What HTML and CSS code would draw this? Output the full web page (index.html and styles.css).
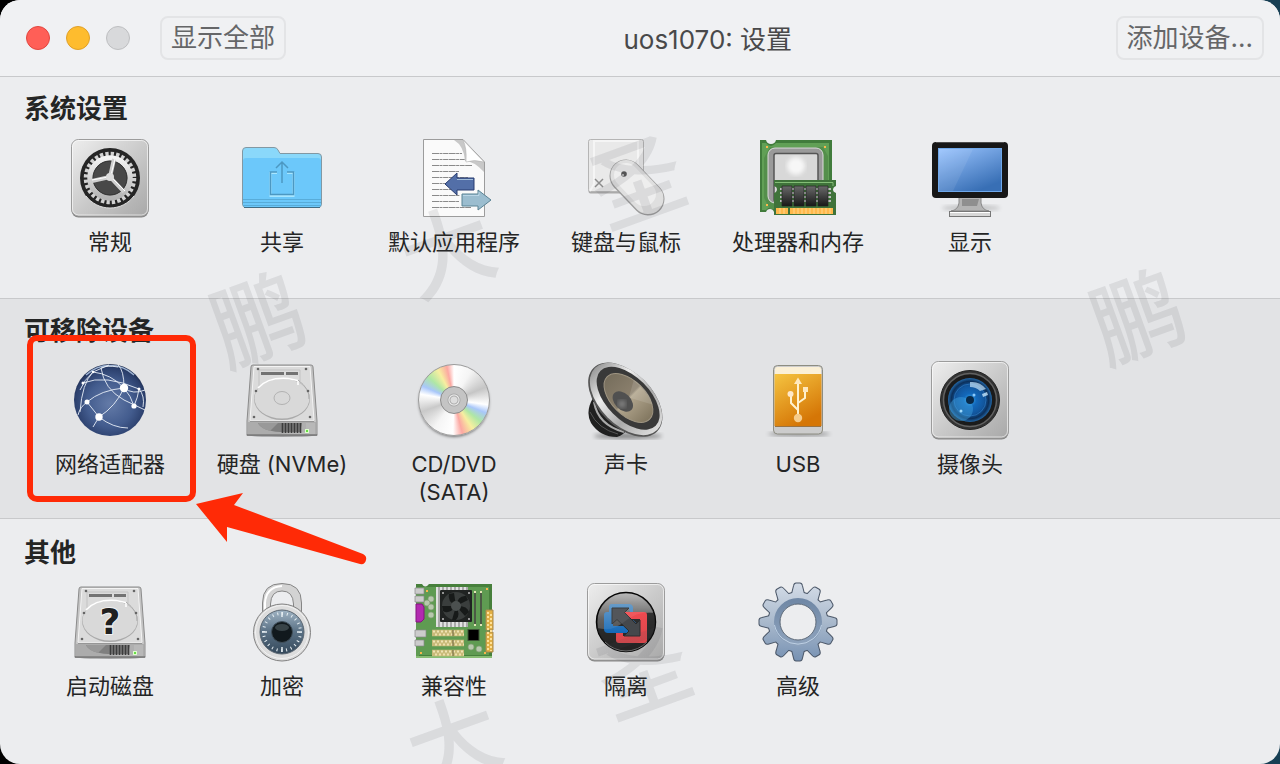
FILE: index.html
```html
<!DOCTYPE html>
<html lang="zh-CN">
<head>
    <meta charset="UTF-8">
    <meta name="viewport" content="width=device-width, initial-scale=1.0">
    <title>uos1070: 设置</title>
    <link rel="stylesheet" href="styles.css">
</head>
<body>
    <!-- 公用图形 -->
    <svg class="defs" width="0" height="0" aria-hidden="true">
        <defs>
            <linearGradient id="plateFill" x1="0" y1="0" x2="1" y2="1">
                <stop offset="0" stop-color="#eeeeee"/>
                <stop offset="1" stop-color="#a8a8a8"/>
            </linearGradient>
            <linearGradient id="metal" x1="0" y1="0" x2="0" y2="1">
                <stop offset="0" stop-color="#f4f4f4"/>
                <stop offset="1" stop-color="#b4b4b4"/>
            </linearGradient>
            <linearGradient id="shade" x1="0" y1="0" x2="0" y2="1">
                <stop offset="0" stop-color="#6a6a6a"/>
                <stop offset="1" stop-color="#181818"/>
            </linearGradient>
            <filter id="soft"><feGaussianBlur stdDeviation="2"/></filter>
            <symbol id="plate" viewBox="0 0 80 80">
                <rect x="1.5" y="2" width="77" height="77.5" rx="7" fill="#858585"/>
                <rect x="1.5" y="1.5" width="77" height="76.5" rx="7" fill="url(#plateFill)" stroke="#9c9c9c"/>
                <rect x="2.5" y="2.5" width="75" height="74.5" rx="6" fill="none" stroke="#fff" stroke-opacity=".6"/>
            </symbol>
            <symbol id="drive" viewBox="0 0 80 80">
                <ellipse cx="40" cy="75" rx="36" ry="2" fill="#000" opacity=".3"/>
                <path d="M11 5H69Q71 5 71 7L75 61V75H5V61L9 7Q9 5 11 5Z" fill="#c4c4c4" stroke="#8b8b8b"/>
                <path d="M6 62H74V74H6Z" fill="#acacac"/>
                <path d="M16 63H64V72H38Q20 71 16 63Z" fill="#7f7f7f"/>
                <path d="M16 63H36L28 71Q18 68 16 63Z" fill="#999"/>
                <path d="M12 6.500H68L72 60Q72 61 70 61H10Q8 61 8 60Z" fill="#dbdbdb" stroke="#f4f4f4"/>
                <path d="M8 61.500H72" stroke="#969696"/>
                <path d="M17 10H58V21" fill="none" stroke="#c3c3c3"/>
                <path d="M17 10V26" stroke="#c3c3c3"/>
                <ellipse cx="40" cy="39" rx="28" ry="21" fill="#aaa"/>
                <ellipse cx="40" cy="38.500" rx="27.500" ry="20" fill="#d9d9d9"/>
                <path d="M16 28Q26 17 46 18.500L56 20.500V25" fill="none" stroke="#fff" stroke-width="1.500"/>
                <path d="M56 20Q68 29 67 39" fill="none" stroke="#aaa"/>
                <path d="M19 13.500H42M44 13.500H56" stroke="#727272" stroke-width="3"/>
                <g fill="#666"><circle cx="16" cy="9" r="1.300"/><circle cx="64" cy="9" r="1.300"/><circle cx="14" cy="31" r="1.300"/><circle cx="66" cy="31" r="1.300"/><circle cx="12" cy="57" r="1.300"/><circle cx="68" cy="57" r="1.300"/></g>
                <path d="M60 63H73V74H38L58 72Z" fill="#bbb" opacity=".8"/>
                <path d="M40.500 63V73M43.500 63V73M46.500 63V73M49.500 63V73M52.500 63V73M55.500 63V73M58.500 63V73" stroke="#3c3c3c" stroke-width="1.600"/>
                <rect x="63.500" y="69.500" width="3" height="3" fill="#6d4" stroke="#dfc"/>
                <path d="M5 75H75" stroke="#666"/>
            </symbol>
        </defs>
    </svg>

    <div class="window">
        <header class="titlebar">
            <div class="lights">
                <button class="light close" aria-label="关闭"></button>
                <button class="light minimize" aria-label="最小化"></button>
                <button class="light zoom" aria-label="缩放"></button>
            </div>
            <button class="bar-button">显示全部</button>
            <h1>uos1070: 设置</h1>
            <button class="bar-button">添加设备...</button>
        </header>

        <main>
            <!-- 系统设置 -->
            <section class="group">
                <h2>系统设置</h2>
                <div class="items">
                    <button class="item">
                        <svg class="icon" viewBox="0 0 80 80">
                            <use href="#plate"/>
                            <circle cx="40" cy="40" r="30" fill="#252525"/>
                            <path d="M16 58A30 30 0 0 0 64 58" fill="none" stroke="#ddd"/>
                            <circle cx="40" cy="40" r="24" fill="none" stroke="#d2d2d2" stroke-width="4.500" stroke-dasharray="3.300 2.084"/>
                            <circle cx="40" cy="40" r="20" fill="#484848" stroke="url(#metal)" stroke-width="5.500"/>
                            <circle cx="40" cy="40" r="17" fill="none" stroke="#333"/>
                            <path d="M40 39L44 21M40 39L22 43M40 39L54 54" stroke="#d0d0d0" stroke-width="4"/>
                            <path d="M41 37L45 21M38 39L22 42M42 40L55 53" stroke="#fff" stroke-width="1"/>
                            <circle cx="40" cy="39" r="4" fill="#ddd"/>
                        </svg>
                        <span>常规</span>
                    </button>
                    <button class="item">
                        <svg class="icon" viewBox="0 0 80 80">
                            <path d="M.5 13Q.5 9.500 4 9.500H32Q35 9.500 36 12L38 15.500H76Q79.500 15.500 79.500 19V66Q79.500 69.500 76 69.500H4Q.5 69.500 .5 66Z" fill="#8ad8fa" stroke="#8298a3"/>
                            <path d="M1 23Q1 20 4 20H76Q79 20 79 23V66Q79 69 76 69H4Q1 69 1 66Z" fill="#6cc8fa"/>
                            <path d="M1 61.500H79M1 64.500H79M1 67.500H79" stroke="#58acd9"/>
                            <path d="M2 69.500H78" stroke="#426b82"/>
                            <path d="M35 35H28.500V58H51.500V35H45" fill="none" stroke="#a7e6ff" stroke-width="2"/>
                            <path d="M35 34H28.500V56.500H51.500V34H45M40 45V24M34 30L40 24L46 30" fill="none" stroke="#4c98c2" stroke-width="1.500"/>
                        </svg>
                        <span>共享</span>
                    </button>
                    <button class="item">
                        <svg class="icon" viewBox="0 0 80 80">
                            <path d="M9.500 1.500H49L70.500 24V78.500H9.500Z" fill="#fafafa" stroke="#9c9c9c"/>
                            <path d="M40 2H49L70 24V34Q60 23 51 23Q50 8 40 2Z" fill="#c8c8c8"/>
                            <path d="M49 2L70 24Q60 21 52 24Q53 10 49 2Z" fill="#fff" stroke="#aaa" stroke-width=".5"/>
                            <path d="M18 15.500H48M18 21.500H51M18 27.500H58M18 33.500H45M18 39.500H54M18 45.500H33M18 51.500H50M18 57.500H46M18 63.500H45M18 69.500H57" stroke="#8a8a8a" stroke-width="1" stroke-dasharray="7 .5 3 .6 5 .5"/>
                            <path d="M31 46L43 35V40H60V52H43V57Z" fill="#536fa8" stroke="#293c70"/>
                            <path d="M77 62L64 52V56H48V68H64V72Z" fill="#9bbdcf" stroke="#5b8495"/>
                            <path d="M43 41.500H59M49 57.500H65V54" fill="none" stroke="#c9e1ef" opacity=".7"/>
                        </svg>
                        <span>默认应用程序</span>
                    </button>
                    <button class="item">
                        <svg class="icon" viewBox="0 0 80 80">
                            <rect x="2.500" y="2.500" width="55" height="53" rx="2" fill="#aaa"/>
                            <rect x="2.500" y="1.500" width="55" height="52" rx="2" fill="#e9e9e9" stroke="#b5b5b5"/>
                            <path d="M4 53L8 46V3H52V46L56 53" fill="none" stroke="#f5f5f5" stroke-width="2"/>
                            <path d="M9 41L17 49M17 41L9 49" stroke="#8c8c8c" stroke-width="1.500"/>
                            <path d="M40 38L62 61" stroke="#9c9c9c" stroke-width="33" stroke-linecap="round"/>
                            <path d="M40 37.500L62 60.500" stroke="#dfdfdf" stroke-width="31" stroke-linecap="round"/>
                            <path d="M40 37L58 56" stroke="#eeeeee" stroke-width="24" stroke-linecap="round"/>
                            <circle cx="38" cy="36" r="2.800" fill="#555"/><circle cx="37" cy="37" r="1" fill="#ccc"/>
                        </svg>
                        <span>键盘与鼠标</span>
                    </button>
                    <button class="item">
                        <svg class="icon" viewBox="0 0 80 80">
                            <path d="M2 2H8Q9 6 13 6Q17 6 18 2H74V74H16Q15 71 12 71Q9 71 8 74H2Z" fill="#417c3c"/>
                            <path d="M4 5H8Q13 11 18 5H71V71H18Q12 67 8 72H4Z" fill="#61a056"/>
                            <path d="M6 20L12 9H65L70 18V71H12L6 60Z" fill="#548f4b"/>
                            <rect x="10" y="10" width="55" height="55" rx="7" fill="#9a9a9a" stroke="#ddd"/>
                            <rect x="16" y="15.500" width="44" height="48" rx="2" fill="#d8d8d8" stroke="#555" stroke-width="1.500"/>
                            <circle cx="38" cy="28" r="9" fill="#fff" opacity=".8" filter="url(#soft)"/>
                            <path d="M8 8H10V10H8ZM66 8H68V10H66ZM8 66H10V68H8Z" fill="#fbb84d"/>
                            <path d="M16 42H78V48Q75 49 75 52Q75 54 78 55V77H16V55Q19 54 19 51Q19 49 16 48Z" fill="#3f733a"/>
                            <path d="M17 44.500H75V48" fill="none" stroke="#83bd76"/>
                            <path d="M22 51H73M22 55H73M22 59H73M22 63H73" stroke="#bbb" stroke-width="2"/>
                            <g fill="url(#shade)" stroke="#222" stroke-width=".7"><path d="M24 48H34V68H24ZM36 48H46V68H36ZM48 48H58V68H48ZM60 48H70V68H60Z"/></g>
                            <path d="M18 70H30V76H18ZM32 70H75V76H32Z" fill="#ffb94c"/>
                            <path d="M22 70V76M26 70V76M36 70V76M40 70V76M44 70V76M48 70V76M52 70V76M56 70V76M60 70V76M64 70V76M68 70V76M72 70V76" stroke="#ffd68b"/>
                        </svg>
                        <span>处理器和内存</span>
                    </button>
                    <button class="item">
                        <svg class="icon" viewBox="0 0 80 80">
                            <linearGradient id="screen" x1="0" y1="0" x2=".6" y2="1"><stop stop-color="#9bc5ff"/><stop offset="1" stop-color="#386fb5"/></linearGradient>
                            <ellipse cx="41" cy="70" rx="29" ry="3" fill="#000" opacity=".18" filter="url(#soft)"/>
                            <path d="M29 59H51V65Q52 72 59 73H21Q28 72 29 65Z" fill="#b4b4b4" stroke="#888"/>
                            <path d="M32 61H49L47 68H32Z" fill="#777" opacity=".6"/>
                            <rect x="19.500" y="73.500" width="41" height="5" fill="#d7d7d7" stroke="#777"/>
                            <path d="M20 74.500H60" stroke="#fff"/>
                            <rect x="2" y="4" width="76" height="56" rx="4" fill="#171717"/>
                            <path d="M6 4.500H74" stroke="#4d4d4d"/>
                            <rect x="8.500" y="10.500" width="63" height="43" fill="url(#screen)" stroke="#6fa8ea"/>
                            <path d="M9 11H43L23 53H9Z" fill="#fff" opacity=".08"/>
                        </svg>
                        <span>显示</span>
                    </button>
                </div>
            </section>

            <!-- 可移除设备 -->
            <section class="group removable">
                <h2>可移除设备</h2>
                <div class="items">
                    <button class="item selected">
                        <svg class="icon" viewBox="0 0 80 80">
                            <radialGradient id="globe" cx=".5" cy=".55" r=".58"><stop stop-color="#647ba8"/><stop offset=".55" stop-color="#435c8e"/><stop offset=".85" stop-color="#2b3f6c"/><stop offset="1" stop-color="#141d36"/></radialGradient>
                            <circle cx="40" cy="40" r="36" fill="url(#globe)"/>
                            <path d="M16 15A35 35 0 0 1 64 15" fill="none" stroke="#9bb1d1" stroke-width="1.500"/>
                            <g fill="none" stroke="#e8eef7" stroke-width=".9">
                                <path d="M54 28Q54 10 48 5M54 28Q41 14 23 12Q14 20 10 30M54 28Q31 30 17 42M54 28Q46 46 29 57M54 28Q61 36 64 46M54 28Q63 35 75 30"/>
                                <path d="M31 8Q34 29 54 40L75 50M31 8Q37 5 48 7M13 23Q35 14 69 29M69 29Q75 36 73 47M64 46Q68 37 69 29M10 52Q12 23 23 12L39 5M17 42L29 57L23 67M17 42Q10 47 8 55M29 57Q43 68 58 68"/>
                            </g>
                            <g fill="#fff"><circle cx="54" cy="28" r="4.200"/><circle cx="17" cy="42" r="2.500"/><circle cx="29" cy="57" r="3.700"/><circle cx="64" cy="46" r="2.600"/><circle cx="13" cy="23" r="1.500"/><circle cx="23" cy="12" r="1.300"/><circle cx="69" cy="29" r="1.500"/></g>
                        </svg>
                        <span>网络适配器</span>
                    </button>
                    <button class="item">
                        <svg class="icon" viewBox="0 0 80 80">
                            <use href="#drive"/>
                            <ellipse cx="40" cy="38" rx="8" ry="6.500" fill="#d8d8d8" stroke="#b2b2b2"/>
                        </svg>
                        <span>硬盘 (NVMe)</span>
                    </button>
                    <button class="item">
                        <span class="icon disc"><span class="hub"></span></span>
                        <span>CD/DVD<br>(SATA)</span>
                    </button>
                    <button class="item">
                        <svg class="icon" viewBox="0 0 80 80">
                            <linearGradient id="rim"><stop stop-color="#999"/><stop offset=".3" stop-color="#eee"/><stop offset=".65" stop-color="#aaa"/><stop offset="1" stop-color="#ddd"/></linearGradient>
                            <linearGradient id="cone"><stop stop-color="#776e5d"/><stop offset=".48" stop-color="#8b806d"/><stop offset=".52" stop-color="#b2a68e"/><stop offset="1" stop-color="#81765f"/></linearGradient>
                            <ellipse cx="42" cy="76" rx="34" ry="3" fill="#000" opacity=".4" filter="url(#soft)"/>
                            <path d="M7 38Q-1 52 5 63Q14 77 31 77Q38 75 41 69Z" fill="#202020"/>
                            <path d="M8 42Q12 65 38 72" fill="none" stroke="#aaa" stroke-width="2"/>
                            <path d="M4 52Q12 69 32 74" fill="none" stroke="#555"/>
                            <g transform="rotate(45 40 39)">
                                <ellipse cx="40" cy="40" rx="45" ry="27" fill="#555"/>
                                <ellipse cx="40" cy="39" rx="44" ry="26" fill="url(#rim)"/>
                                <ellipse cx="41" cy="37" rx="39" ry="21.500" fill="#393939"/>
                                <ellipse cx="41" cy="36.500" rx="30" ry="17" fill="url(#cone)" stroke="#9f9582"/>
                                <path d="M41 36L32 20Q50 16 63 24Z" fill="#fff" opacity=".12"/>
                                <ellipse cx="39.500" cy="43" rx="12" ry="8" fill="#505050"/>
                            </g>
                            <circle cx="36" cy="44" r="4" fill="#aaa" opacity=".5" filter="url(#soft)"/>
                        </svg>
                        <span>声卡</span>
                    </button>
                    <button class="item">
                        <svg class="icon" viewBox="0 0 80 80">
                            <linearGradient id="orange" x1="0" y1="0" x2=".5" y2="1"><stop stop-color="#f5c441"/><stop offset="1" stop-color="#d57606"/></linearGradient>
                            <ellipse cx="41" cy="74" rx="31" ry="2" fill="#000" opacity=".4" filter="url(#soft)"/>
                            <rect x="15.500" y="5.500" width="49" height="68.500" rx="4" fill="#ccc" stroke="#8d8d82"/>
                            <path d="M17 14V9Q17 7 19 7H61Q63 7 63 9V14Z" fill="#fbf0d6"/>
                            <path d="M16.500 14H63.500V66H16.500Z" fill="url(#orange)"/>
                            <path d="M17 66.500H63" stroke="#997343"/>
                            <path d="M40 58V21M40 50L33 43V34M40 43L47 38V29" fill="none" stroke="#fff2cf" stroke-width="2"/>
                            <path d="M36 24L40 17.500L44 24Z" fill="#ffe8bd"/><circle cx="40" cy="58" r="4.200" fill="#f6cc8c"/><circle cx="32.500" cy="34" r="3" fill="#ffe8c8"/><path d="M45 27H50V32H45Z" fill="#ffe8bd"/>
                        </svg>
                        <span>USB</span>
                    </button>
                    <button class="item">
                        <svg class="icon" viewBox="0 0 80 80">
                            <radialGradient id="lens"><stop stop-color="#39adf1"/><stop offset=".3" stop-color="#1368ba"/><stop offset=".65" stop-color="#12569d"/><stop offset=".85" stop-color="#0c305b"/><stop offset="1" stop-color="#2368a8"/></radialGradient>
                            <use href="#plate"/>
                            <circle cx="40" cy="40" r="29.500" fill="#333" stroke="#222"/>
                            <circle cx="40" cy="40" r="26.500" fill="#1b1b1b" stroke="#626262" stroke-width="1.500"/>
                            <circle cx="40" cy="40" r="22" fill="url(#lens)"/>
                            <circle cx="40" cy="40" r="16" fill="none" stroke="#3283d1" opacity=".6"/>
                            <circle cx="31" cy="49" r="12" fill="#42a5df" opacity=".45"/>
                            <path d="M40 22Q50 21 56 29L50 31Q46 27 40 27Z" fill="#b9daf1" opacity=".75"/>
                            <path d="M52 34L57 32L58 35L53 37Z" fill="#c7e7fb" opacity=".8"/>
                            <circle cx="40" cy="40" r="4" fill="#092a49"/>
                            <circle cx="44" cy="35" r="1.500" fill="#8ac9fc"/><circle cx="31" cy="51" r="1.500" fill="#9ed8fa"/>
                        </svg>
                        <span>摄像头</span>
                    </button>
                </div>
            </section>

            <!-- 其他 -->
            <section class="group other">
                <h2>其他</h2>
                <div class="items">
                    <button class="item">
                        <svg class="icon" viewBox="0 0 80 80">
                            <use href="#drive"/>
                            <text class="question" x="40" y="52" text-anchor="middle">?</text>
                        </svg>
                        <span>启动磁盘</span>
                    </button>
                    <button class="item">
                        <svg class="icon" viewBox="0 0 80 80">
                            <linearGradient id="dial" x1="0" y1="0" x2="0" y2="1"><stop stop-color="#a0b4c4"/><stop offset=".5" stop-color="#597084"/><stop offset="1" stop-color="#34485a"/></linearGradient>
                            <path d="M20.500 40V21Q20.500 1.500 40 1.500Q59.500 1.500 59.500 21V40H51.500V22Q51 9 40 9Q29 9 28.500 22V40Z" fill="#d3d3d3" stroke="#858585"/>
                            <path d="M23 35V21Q24 5 40 4" fill="none" stroke="#fff" stroke-width="2"/>
                            <circle cx="40" cy="50.500" r="28.500" fill="#ddd" stroke="#828282"/>
                            <circle cx="40" cy="50" r="26.500" fill="none" stroke="#f3f3f3"/>
                            <circle cx="40" cy="50" r="22" fill="url(#dial)" stroke="#596570"/>
                            <circle cx="40" cy="50" r="18.500" fill="none" stroke="#e5edf1" stroke-width="3" stroke-dasharray="1 3.843" stroke-dashoffset=".5"/>
                            <path d="M40 30V35M40 65V70M20 50H25M55 50H60" stroke="#e5edf1" stroke-width="1.500"/>
                            <circle cx="40" cy="50" r="10.500" fill="#11191d" stroke="#41505b"/>
                            <ellipse cx="40" cy="45.500" rx="7" ry="3.500" fill="#49565a" opacity=".7"/>
                        </svg>
                        <span>加密</span>
                    </button>
                    <button class="item">
                        <svg class="icon" viewBox="0 0 80 80">
                            <path d="M2 2H8Q11 7 15 2H78V76H2Z" fill="#47803c"/>
                            <path d="M3 5H75V73H5V76H2V5Z" fill="#5f9b52"/>
                            <path d="M2 75H78" stroke="#87bc73" stroke-width="2"/>
                            <rect x="22" y="5" width="32" height="40" fill="#aaa"/>
                            <path d="M23 5V45M27 5V45M31 5V45M35 5V45M39 5V45M43 5V45M47 5V45M51 5V45" stroke="#e1e1e1" stroke-width="2"/>
                            <rect x="26" y="8" width="32" height="32" rx="1" fill="#202322"/>
                            <circle cx="42" cy="24" r="14" fill="#3a3e3d"/>
                            <path d="M42 24Q33 19 35 12L40 11ZM42 24Q44 13 52 14L54 18ZM42 24Q53 23 55 30L51 34ZM42 24Q47 33 42 38H38ZM42 24Q35 33 29 29L28 24Z" fill="#171a19"/>
                            <circle cx="42" cy="24" r="5" fill="#4b504f"/>
                            <g fill="#bbb"><circle cx="29" cy="11" r="1"/><circle cx="55" cy="11" r="1"/><circle cx="29" cy="37" r="1"/><circle cx="55" cy="37" r="1"/></g>
                            <path d="M61 10V44M67 10V44" stroke="#4c5945" stroke-width="2"/>
                            <path d="M60 10H62M66 10H68M60 43H62M66 43H68" stroke="#e4e4b5" stroke-width="2"/>
                            <path d="M1 6H10V12H1ZM1 14H10V20H1ZM1 48H12V55H1ZM1 58H10V64H1Z" fill="#ccc" stroke="#888" stroke-width=".7"/>
                            <path d="M2 22H8L10 25V37L7 40H2Z" fill="#b22ab0" stroke="#83157f"/>
                            <g fill="#b7c8ad" stroke="#849d77" stroke-width=".7"><circle cx="17" cy="17" r="3"/><circle cx="13" cy="21" r="3"/><circle cx="17" cy="25" r="3"/><circle cx="17" cy="33" r="3"/><circle cx="57" cy="65" r="3"/><circle cx="65" cy="67" r="3"/></g>
                            <path d="M18 51H50M18 61H50M18 71H50" stroke="#c8ba79" stroke-width="6.500"/>
                            <path d="M19 49.500H50M19 59.500H50M19 69.500H50" stroke="#f0e4b5" stroke-width="2" stroke-dasharray="2 2"/>
                            <path d="M21 52.500H50M21 62.500H50M21 72.500H50" stroke="#eee0ae" stroke-width="2" stroke-dasharray="2 2"/>
                            <path d="M39 48V54M39 58V64M39 68V74" stroke="#756d41" stroke-width="2" opacity=".6"/>
                            <rect x="54" y="47.500" width="11" height="11" fill="#000" stroke="#3e5637"/>
                            <path d="M72 28H79V48H72ZM72 50H79V70H72Z" fill="#e3b044" stroke="#a88a51"/>
                            <path d="M74 30V69M77 32V69" stroke="#ffe198" stroke-width="2" stroke-dasharray="2 2"/>
                            <path d="M12 8H14V10H12ZM72 6H74V8H72ZM6 70H8V72H6ZM70 70H72V72H70Z" fill="#f8b54c"/>
                        </svg>
                        <span>兼容性</span>
                    </button>
                    <button class="item">
                        <svg class="icon" viewBox="0 0 80 80">
                            <linearGradient id="glass" x1="0" y1="0" x2="0" y2="1"><stop stop-color="#b5b5b5"/><stop offset=".45" stop-color="#555"/><stop offset="1" stop-color="#2a2a2a"/></linearGradient>
                            <linearGradient id="blueLink" x1="0" y1="0" x2="0" y2="1"><stop stop-color="#5a93c4"/><stop offset="1" stop-color="#1268b8"/></linearGradient>
                            <linearGradient id="redLink" x1="0" y1="0" x2="0" y2="1"><stop stop-color="#f04a50"/><stop offset="1" stop-color="#d8474c"/></linearGradient>
                            <use href="#plate"/>
                            <circle cx="40" cy="40" r="29.500" fill="url(#glass)" stroke="#050505" stroke-width="1.500"/>
                            <path d="M11 46Q25 50 38 40Q52 29 68 31Q71 42 67 51Q60 68 40 68.500Q17 68 11 46Z" fill="#202020" opacity=".75"/>
                            <path fill-rule="evenodd" d="M26 22H43Q46 22 47 25V30H44L43 27H27V44H47V38L51 42V51H22Q18 51 18 47V33Q18 30 21 30H23V25Q23 22 26 22Z" fill="url(#blueLink)"/>
                            <path fill-rule="evenodd" d="M36 30H58Q61 30 61 33V58Q61 61 58 61H33Q30 61 30 58V51H37V54H54V37H40L33 31Q34 30 36 30Z" fill="url(#redLink)"/>
                            <path d="M26 26H43L38.500 30.500L50 42L54 38V54H38L43 49L31 37.500L26 42Z" fill="#45484c" stroke="#2a2c2e"/>
                            <path d="M12 34Q16 12 40 11.500Q61 12 68 30Q51 29 38 40Q27 50 12 46Z" fill="#fff" opacity=".08"/>
                            <path d="M19 60A29 29 0 0 0 61 60" fill="none" stroke="#aaa" opacity=".6"/>
                        </svg>
                        <span>隔离</span>
                    </button>
                    <button class="item">
                        <svg class="icon" viewBox="0 0 80 80">
                            <linearGradient id="steel" x1="0" y1="0" x2="0" y2="1"><stop stop-color="#d5dde8"/><stop offset=".5" stop-color="#a9b9cc"/><stop offset="1" stop-color="#7590b2"/></linearGradient>
                            <linearGradient id="steelRing" x1="0" y1="0" x2="0" y2="1"><stop stop-color="#7088a6"/><stop offset="1" stop-color="#8da2bc"/></linearGradient>
                            <defs>
                                <path id="bar" d="M34 12L36 4Q36.500 1.500 38 1.500H42Q43.500 1.500 44 4L46 12V68L44 76Q43.500 78.500 42 78.500H38Q36.500 78.500 36 76L34 68Z"/>
                                <g id="cog">
                                    <use href="#bar"/>
                                    <use href="#bar" transform="rotate(30 40 40)"/>
                                    <use href="#bar" transform="rotate(60 40 40)"/>
                                    <use href="#bar" transform="rotate(90 40 40)"/>
                                    <use href="#bar" transform="rotate(120 40 40)"/>
                                    <use href="#bar" transform="rotate(150 40 40)"/>
                                    <circle cx="40" cy="40" r="29.500"/>
                                </g>
                                <mask id="hole"><rect width="80" height="80" fill="#fff"/><circle cx="40" cy="40" r="18" fill="#000"/></mask>
                                <mask id="cogMask"><use href="#cog" fill="#fff"/></mask>
                            </defs>
                            <g mask="url(#hole)">
                                <use href="#cog" fill="#4b5768" stroke="#4b5768" stroke-width="2"/>
                                <rect width="80" height="80" fill="url(#steel)" mask="url(#cogMask)"/>
                                <circle cx="40" cy="40" r="21" fill="none" stroke="url(#steelRing)" stroke-width="6"/>
                                <path d="M16.500 43A24 24 0 0 0 63.500 43" fill="none" stroke="#bed0e4"/>
                            </g>
                            <circle cx="40" cy="40" r="18" fill="none" stroke="#5d6978"/>
                        </svg>
                        <span>高级</span>
                    </button>
                </div>
            </section>
        </main>

        <!-- 箭头标注 -->
        <svg class="arrow" width="172" height="74" viewBox="0 0 172 74" aria-hidden="true">
            <path d="M1 13L48 2L39 14L168 63Q172 65 171 69Q170 74 165 73L32 36V51Z" fill="#ff2a06"/>
        </svg>

        <!-- 水印 -->
        <div class="watermark mark-one" aria-hidden="true"><span>鹏</span><span>大</span><span>圣</span></div>
        <div class="watermark mark-two" aria-hidden="true"><span>大</span><span>圣</span></div>
        <div class="watermark mark-three" aria-hidden="true"><span>鹏</span></div>
    </div>
</body>
</html>
```
FILE: styles.css
```css
:root {
    --window-bg: #ecedef;
    --bar-bg: #f0f1f3;
    --band-bg: #e2e3e5;
    --line-color: #c8c9cb;
    --text-color: #242525;
    --mark-color: #ff2a06;
}

*,
*::after {
    margin: 0;
    padding: 0;
    box-sizing: border-box;
    font-family: Inter, "Noto Sans CJK SC", sans-serif;
}

body {
    background: linear-gradient(90deg, #000 50%, #173f54 50%);
    color: var(--text-color);
    min-height: 100vh;
}

button {
    background: none;
    border: none;
    color: inherit;
}

.defs {
    position: absolute;
}

.window {
    position: relative;
    min-height: 100vh;
    overflow: hidden;
    background: var(--window-bg);
    border-radius: 20px;
}

/* 标题栏 */
.titlebar {
    display: flex;
    align-items: center;
    height: 77px;
    padding: 0 16px 0 26px;
    background: var(--bar-bg);
    border-bottom: 1px solid var(--line-color);
}

.lights {
    display: flex;
    gap: 16px;
    margin-right: 30px;
}

.light {
    width: 24px;
    height: 24px;
    border-radius: 50%;
}

.close {
    background: #ff5f57;
    border: 1px solid #e2463f;
}

.minimize {
    background: #febc2e;
    border: 1px solid #e0a028;
}

.zoom {
    background: #d8d9db;
    border: 1px solid #bebfc1;
}

.bar-button {
    height: 44px;
    padding: 0 9px;
    border: 2px solid #e3e4e6;
    border-radius: 8px;
    color: #656668;
    font-size: 26px;
    line-height: 40px;
    white-space: nowrap;
}

.titlebar h1 {
    flex: 1;
    padding: 4px 0 0 14px;
    text-align: center;
    color: #49494a;
    font-size: 26px;
    font-weight: 400;
    line-height: 36px;
}

/* 设置分组 */
.group {
    padding: 14px 24px 42px;
}

.group h2 {
    margin-bottom: 11px;
    font-size: 26px;
    font-weight: 700;
    line-height: 36px;
}

.removable {
    padding-bottom: 12px;
    background: var(--band-bg);
    border-top: 1px solid var(--line-color);
    border-bottom: 1px solid var(--line-color);
}

.other {
    padding-top: 16px;
}

.items {
    display: grid;
    grid-template-columns: repeat(auto-fill, 172px);
    align-items: start;
}

.item {
    position: relative;
    display: flex;
    flex-direction: column;
    align-items: center;
    gap: 10px;
    font-size: 22px;
    line-height: 28px;
}

.icon {
    display: block;
    width: 80px;
    height: 80px;
}

.question {
    fill: #202020;
    stroke: #f2f2f2;
    stroke-width: 2px;
    paint-order: stroke;
    font: 700 36px "DejaVu Sans", sans-serif;
}

/* 光盘 */
.disc {
    width: 72px;
    height: 72px;
    margin: 4px;
    padding: 21px;
    border: 1px solid #9b9b9b;
    border-radius: 50%;
    background: conic-gradient(#fff 0deg, #f5f5f5 30deg, #c5c5c5 68deg, #fff 98deg, #a9c7fa 112deg, #afe7a5 129deg, #f7efa0 147deg, #fca8a2 166deg, #fff 182deg, #f5f5f5 215deg, #c9c9c9 250deg, #fff 280deg, #a9c7fa 294deg, #afe7a5 312deg, #f7efa0 332deg, #fca8a2 348deg, #fff 360deg);
    box-shadow: 0 2px 3px -1px rgba(0, 0, 0, 0.5);
}

.hub {
    display: block;
    width: 28px;
    height: 28px;
    border: 1px solid #8b8b8b;
    border-radius: 50%;
    background: radial-gradient(circle, #ddd 3px, #aaa 4px, #eee 5px, #aaa 6px, #c4c4c4 7px);
}

/* 红框标注 */
.selected::after {
    content: '';
    position: absolute;
    top: -25px;
    left: 3px;
    width: 169px;
    height: 167px;
    border: 6px solid var(--mark-color);
    border-radius: 10px;
    pointer-events: none;
}

.arrow {
    position: absolute;
    left: 195px;
    top: 491px;
    pointer-events: none;
}

/* 水印 */
.watermark {
    position: absolute;
    display: flex;
    gap: 110px;
    color: rgba(70, 75, 80, 0.11);
    font-size: 92px;
    font-weight: 500;
    line-height: 96px;
    transform: rotate(-20deg);
    pointer-events: none;
}

.mark-one {
    left: 200px;
    top: 204px;
}

.mark-two {
    left: 402px;
    top: 660px;
}

.mark-three {
    left: 1092px;
    top: 270px;
}
```
